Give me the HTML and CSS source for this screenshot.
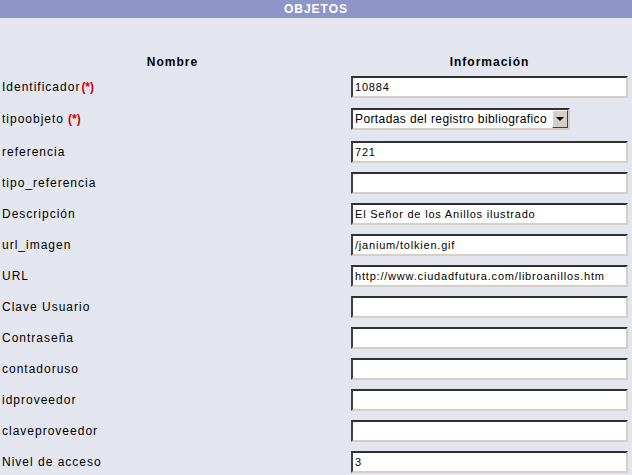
FILE: index.html
```html
<!DOCTYPE html>
<html lang="es">
<head>
<meta charset="utf-8">
<title>Objetos</title>
<link rel="stylesheet" href="styles.css">
</head>
<body>
<div class="titlebar">OBJETOS</div>
<div class="form">
  <div class="colhead">Nombre</div>
  <div class="colhead">Información</div>

  <div class="label">Identificador<span class="req">(*)</span></div>
  <div class="cell"><div class="field">10884</div></div>

  <div class="label">tipoobjeto<span class="req spaced">(*)</span></div>
  <div class="cell">
    <div class="combo">
      <span class="combo-text">Portadas del registro bibliografico</span>
      <span class="combo-btn"><span class="tri"></span></span>
    </div>
  </div>

  <div class="label">referencia</div>
  <div class="cell"><div class="field">721</div></div>

  <div class="label">tipo_referencia</div>
  <div class="cell"><div class="field"></div></div>

  <div class="label">Descripción</div>
  <div class="cell"><div class="field">El Señor de los Anillos ilustrado</div></div>

  <div class="label">url_imagen</div>
  <div class="cell"><div class="field">/janium/tolkien.gif</div></div>

  <div class="label">URL</div>
  <div class="cell"><div class="field">http://www.ciudadfutura.com/libroanillos.htm</div></div>

  <div class="label">Clave Usuario</div>
  <div class="cell"><div class="field"></div></div>

  <div class="label">Contraseña</div>
  <div class="cell"><div class="field"></div></div>

  <div class="label">contadoruso</div>
  <div class="cell"><div class="field"></div></div>

  <div class="label">idproveedor</div>
  <div class="cell"><div class="field"></div></div>

  <div class="label">claveproveedor</div>
  <div class="cell"><div class="field"></div></div>

  <div class="label">Nivel de acceso</div>
  <div class="cell"><div class="field">3</div></div>
</div>
</body>
</html>
```

FILE: styles.css
```css
html, body {
  margin: 0;
  padding: 0;
}
body {
  background: #e3e6ef;
  font-family: "Liberation Sans", Arial, sans-serif;
  font-size: 12px;
  color: #000;
  width: 632px;
  height: 475px;
  overflow: hidden;
}
.titlebar {
  height: 18px;
  line-height: 18px;
  background: #8e96c9;
  color: #fff;
  font-weight: bold;
  font-size: 12px;
  letter-spacing: 1px;
  text-align: center;
}
.form {
  display: grid;
  grid-template-columns: 351px 277px;
  grid-template-rows: 18px 31px 34px;
  grid-auto-rows: 31px;
  padding-top: 35px;
}
.colhead {
  align-self: start;
  height: 18px;
  line-height: 18px;
  font-weight: bold;
  letter-spacing: 1px;
  text-align: center;
  padding-right: 6px;
}
.colhead + .colhead {
  padding-right: 0;
}
.label {
  display: flex;
  align-items: center;
  padding-left: 2px;
  letter-spacing: 1px;
}
.req {
  color: #cc0000;
  font-weight: bold;
  letter-spacing: 0;
  margin-left: 1px;
}
.req.spaced {
  margin-left: 4px;
}
.cell {
  display: flex;
  align-items: center;
}
.field {
  box-sizing: border-box;
  width: 277px;
  height: 22px;
  background: #fff;
  border-style: solid;
  border-width: 2px;
  border-color: #303030 #d4d0c8 #d4d0c8 #404040;
  font-size: 11px;
  letter-spacing: 0.8px;
  line-height: 18px;
  padding-left: 2px;
  white-space: nowrap;
  overflow: hidden;
}
.combo {
  box-sizing: border-box;
  width: 219px;
  height: 22px;
  background: #fff;
  border-style: solid;
  border-width: 2px;
  border-color: #303030 #d4d0c8 #d4d0c8 #404040;
  display: flex;
  align-items: center;
  padding-left: 2px;
}
.combo-text {
  flex: 1;
  font-size: 12px;
  letter-spacing: 0.4px;
  white-space: nowrap;
  overflow: hidden;
}
.combo-btn {
  box-sizing: border-box;
  width: 16px;
  height: 18px;
  background: #d4d0c8;
  border-style: solid;
  border-width: 1px;
  border-color: #fff #404040 #404040 #fff;
  display: flex;
  align-items: center;
  justify-content: center;
}
.tri {
  width: 0;
  height: 0;
  border-left: 4px solid transparent;
  border-right: 4px solid transparent;
  border-top: 4px solid #000;
}
```
